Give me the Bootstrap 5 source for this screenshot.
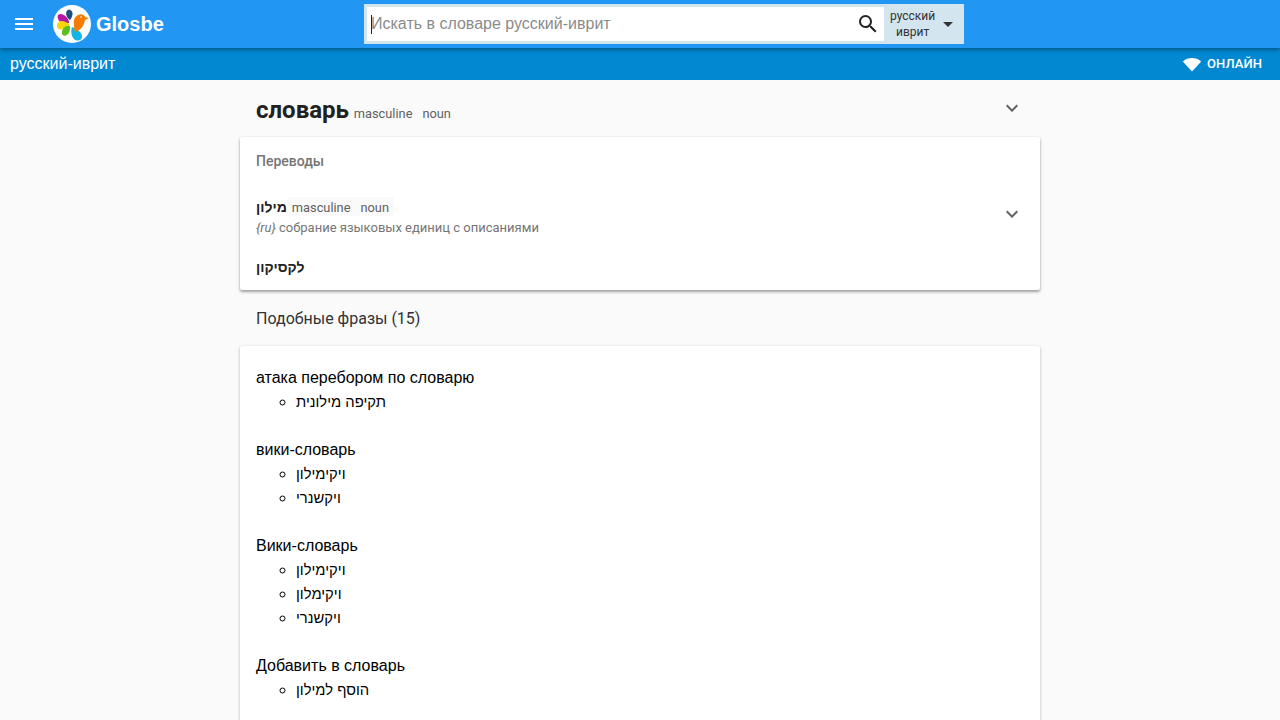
<!DOCTYPE html>
<html lang="ru">
<head>
<meta charset="utf-8">
<title>Glosbe</title>
<link rel="stylesheet" href="https://cdn.jsdelivr.net/npm/bootstrap@5.3.0/dist/css/bootstrap.min.css">
<style>
html,body{height:720px;overflow:hidden}
body{background:#fafafa;font-family:Roboto,"Liberation Sans",sans-serif;color:#212121;font-size:16px;line-height:24px}
.gb-top{height:48px;background:#2196f3;box-shadow:0 2px 4px rgba(0,0,0,.35);position:relative;z-index:2}
.gb-menu{width:48px;height:48px;flex:none}
.gb-logo{width:38px;height:38px;margin-left:5px;flex:none}
.gb-brand{font:700 20px/48px "Liberation Sans",sans-serif;color:#fff;margin-left:5px}
.gb-searchwrap{position:absolute;left:364px;top:4px;width:600px;height:40px;background:#d3e5ef;padding:3px 0 3px 3px}
.gb-searchbox{background:#fff;height:34px;padding-left:4px;position:relative}
.gb-caret{position:absolute;left:4px;top:8px;width:1px;height:19px;background:#212121}
.gb-input{border:0;outline:0;width:100%;height:34px;font:16px/34px "Liberation Sans",sans-serif;color:#212121;padding:0;background:transparent}
.gb-input::placeholder{color:#8b8b8b;opacity:1}
.gb-langbtn{width:80px;flex:none;font:12px/16px Roboto,sans-serif;color:#333;text-align:center;padding-left:6px}
.gb-langarrow{margin-left:1px}
.gb-sub{height:32px;background:#0288d1;color:#fff;padding:0 18px 0 10px;font-family:"Liberation Sans",sans-serif}
.gb-online{font:500 13px/16px Roboto,sans-serif;letter-spacing:.05px}
.gb-onlinelabel{margin-left:5px}
.gb-main{width:800px;margin:0 auto}
.gb-head{height:57px;padding:16px 16px 0}
.gb-word{font-size:24px;font-weight:700;line-height:28px}
.gb-tag{font-size:12.8px;color:#616161;padding:0 5px;line-height:16px}
.gb-panel{background:#fff;border-radius:2px;box-shadow:0 1px 3px rgba(0,0,0,.3)}
.gb-panel-a{height:153px;padding:16px;box-shadow:0 2px 3px rgba(0,0,0,.35),0 0 2px rgba(0,0,0,.12)}
.gb-subtitle{font-size:14px;font-weight:500;color:#757575;line-height:16px}
.gb-trans{font-size:14px;font-weight:700;line-height:16px}
.gb-tagbox{background:#fafafa;display:inline-block;line-height:19px}
.gb-desc{font-size:13px;color:#757575;line-height:16px;margin-top:1px}
.gb-sim{height:56px;padding-left:16px;line-height:57px;color:#333}
.gb-panel-b{padding:20px 16px 0;height:500px;color:#000}
.gb-group{margin-bottom:24px}
.gb-phrase{font:16px/24px "Liberation Sans",sans-serif;color:#000}
.gb-list{list-style:circle;margin:0;padding:0 0 0 40px;font:14.8px/24px "Liberation Sans",sans-serif}
.gb-list li::marker{font-size:16px}
.gb-row1{margin-top:26px}
.gb-row2{margin-top:23px}
.gb-chev2{margin-top:7px}
</style>
</head>
<body>
<header class="gb-top d-flex align-items-center">
  <div class="gb-menu d-flex align-items-center justify-content-center">
    <svg width="24" height="24" viewBox="0 0 24 24" fill="#fff"><path d="M3 18h18v-2H3v2zm0-5h18v-2H3v2zm0-7v2h18V6H3z"/></svg>
  </div>
  <svg class="gb-logo" viewBox="0 0 38 38">
    <circle cx="19" cy="19" r="19" fill="#fff"/>
    <path d="M17 15C12 12 12 5 16 4.500 20 5 21 10 17 15z" fill="#1d4f7c"/>
    <path d="M16 17C15 12 9 7 5 10 3 15 9 20 16 18z" fill="#b5179e"/>
    <path d="M16 19C11 15 5 15 4 20 3 26 12 26 16 20z" fill="#f5d60b"/>
    <path d="M17 21C12 20 8 25 9 29 11 33 18 30 17 21z" fill="#5bbf21"/>
    <path d="M19 22C17 27 19 35 24 35.500 30 36 30 30 27 27 25 25 22 23 19 22z" fill="#12b5e5"/>
    <path d="M21 19C20 14 23 10 27 9.500 29 9 31 10 32 12L36 13 32 15C31 21 27 26 22 27 21 24 21 22 21 19z" fill="#f57c00"/>
    <circle cx="28" cy="12" r=".8" fill="#fff"/>
  </svg>
  <div class="gb-brand">Glosbe</div>
  <div class="gb-searchwrap d-flex">
    <div class="gb-searchbox flex-grow-1 d-flex align-items-center">
      <span class="gb-caret"></span>
      <input class="gb-input" placeholder="Искать в словаре русский-иврит">
      <svg width="24" height="24" viewBox="0 0 24 24" fill="#212121" class="flex-shrink-0 me-1"><path d="M15.500 14h-.79l-.28-.27A6.470 6.470 0 0 0 16 9.500 6.500 6.500 0 1 0 9.500 16c1.610 0 3.090-.59 4.230-1.570l.27.28v.79l5 4.990L20.490 19l-4.990-5zm-6 0C7.010 14 5 11.990 5 9.500S7.010 5 9.500 5 14 7.010 14 9.500 11.990 14 9.500 14z"/></svg>
    </div>
    <div class="gb-langbtn d-flex align-items-center">
      <div>русский<br>иврит</div>
      <svg class="gb-langarrow" width="24" height="24" viewBox="0 0 24 24" fill="#333"><path d="M7 10l5 5 5-5z"/></svg>
    </div>
  </div>
</header>
<div class="gb-sub d-flex align-items-center justify-content-between">
  <div>русский-иврит</div>
  <div class="gb-online d-flex align-items-center">
    <svg width="20" height="20" viewBox="0 0 24 24" fill="#fff"><path d="M12 21 1 9c6-5.500 16-5.500 22 0z"/></svg>
    <span class="gb-onlinelabel">ОНЛАЙН</span>
  </div>
</div>
<main class="gb-main">
  <div class="gb-head d-flex justify-content-between">
    <div><span class="gb-word">словарь</span><span class="gb-tag">masculine</span><span class="gb-tag">noun</span></div>
    <svg width="24" height="24" viewBox="0 0 24 24" fill="#616161"><path d="M16.590 8.590 12 13.170 7.410 8.590 6 10l6 6 6-6z"/></svg>
  </div>
  <section class="gb-panel gb-panel-a">
    <div class="gb-subtitle">Переводы</div>
    <div class="d-flex justify-content-between gb-row1">
      <div>
        <div><span class="gb-trans">מילון</span><span class="gb-tagbox"><span class="gb-tag">masculine</span><span class="gb-tag">noun</span></span></div>
        <div class="gb-desc"><i>{ru}</i> собрание языковых единиц с описаниями</div>
      </div>
      <svg class="gb-chev2" width="24" height="24" viewBox="0 0 24 24" fill="#616161"><path d="M16.590 8.590 12 13.170 7.410 8.590 6 10l6 6 6-6z"/></svg>
    </div>
    <div class="gb-trans gb-row2">לקסיקון</div>
  </section>
  <div class="gb-sim">Подобные фразы (15)</div>
  <section class="gb-panel gb-panel-b">
    <div class="gb-group"><div class="gb-phrase">атака перебором по словарю</div><ul class="gb-list"><li>תקיפה מילונית</li></ul></div>
    <div class="gb-group"><div class="gb-phrase">вики-словарь</div><ul class="gb-list"><li>ויקימילון</li><li>ויקשנרי</li></ul></div>
    <div class="gb-group"><div class="gb-phrase">Вики-словарь</div><ul class="gb-list"><li>ויקימילון</li><li>ויקימלון</li><li>ויקשנרי</li></ul></div>
    <div class="gb-group"><div class="gb-phrase">Добавить в словарь</div><ul class="gb-list"><li>הוסף למילון</li></ul></div>
  </section>
</main>
<script src="https://cdn.jsdelivr.net/npm/bootstrap@5.3.0/dist/js/bootstrap.bundle.min.js"></script>
</body>
</html>
